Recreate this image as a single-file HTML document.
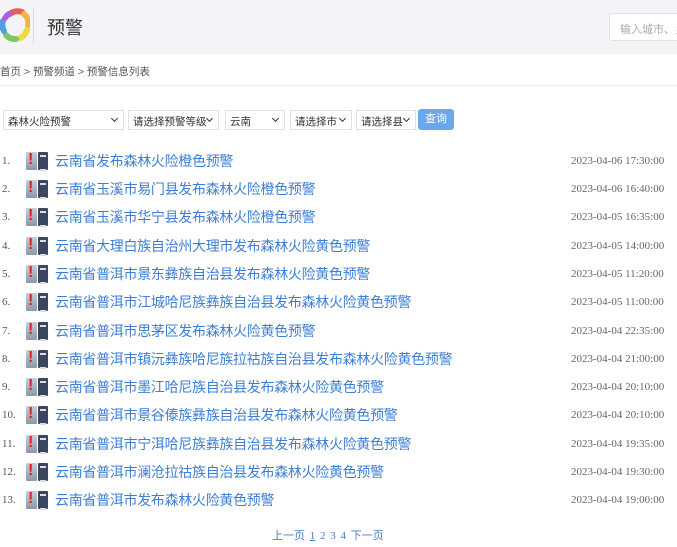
<!DOCTYPE html>
<html><head><meta charset="utf-8"><style>
*{margin:0;padding:0;box-sizing:border-box}
body{width:677px;height:547px;background:#fff;font-family:"Liberation Sans","Noto Sans CJK SC",sans-serif;position:relative;overflow:hidden;color:#333}
.hdr{position:absolute;left:0;top:0;width:677px;height:54px;background:#f3f3f8}
.sep{position:absolute;left:33px;top:8px;width:1px;height:36px;background:#ddd}
.ttl{position:absolute;left:47px;top:14px;font-size:18px;color:#333}
.srch{position:absolute;left:609px;top:13px;width:80px;height:28px;background:#fff;border:1px solid #e2e2e2;border-radius:3px;font-size:11px;color:#aaa;padding:7px 0 0 10px;white-space:nowrap}
.bc{position:absolute;left:0;top:64px;font-size:10.5px;color:#555}
.line{position:absolute;left:0;top:85px;width:677px;height:1px;background:#eee}
.sel{position:absolute;top:110px;height:20px;border:1px solid #e2e2e2;font-size:10.5px;color:#333;padding:3px 0 0 4px;background:#fff;white-space:nowrap;overflow:hidden}
.sel:after{content:"";position:absolute;right:6px;top:5px;width:4px;height:4px;border-right:1.6px solid #333;border-bottom:1.6px solid #333;transform:rotate(45deg)}
.btn{position:absolute;left:418px;top:109px;width:36px;height:21px;background:#69a7ee;color:#fff;border-radius:3px;font-size:11px;text-align:center;line-height:21px}
.row{position:absolute;left:0;height:20px;width:677px}
.n{position:absolute;left:2px;top:4px;font-family:"Liberation Serif",serif;font-size:11px;color:#555}
.ic{position:absolute;left:26px;top:1px;width:22px;height:18px}
.ic i{position:absolute;left:0;top:0;width:11px;height:18px;background:linear-gradient(#ccd,#8899aa);border-radius:1px}
.ic i:after{content:"!";position:absolute;left:2px;top:-1px;color:#e02020;font-weight:bold;font-size:16px;font-style:normal}
.ic b{position:absolute;left:12px;top:0;width:10px;height:18px;background:#3b4660;border-radius:1px}
.ic b:after{content:"";position:absolute;left:2px;top:3px;width:6px;height:12px;border-top:2px solid #ddd;border-bottom:2px solid #ddd}
.t{position:absolute;left:55px;top:0;font-size:14px;letter-spacing:-0.3px;color:#3d7fd6;white-space:nowrap}
.d{position:absolute;left:571px;top:4px;font-family:"Liberation Serif",serif;font-size:11px;color:#666}
.pg{position:absolute;left:272px;top:527px;font-size:11px;color:#4a7dc6;font-family:"Liberation Serif","Noto Sans CJK SC",serif;word-spacing:2px}
</style></head><body>
<div class="hdr">
<svg style="position:absolute;left:0;top:6px" width="30" height="38" viewBox="0 0 30 38">
<g fill="none" stroke-width="6" stroke-linecap="round" opacity="0.85">
<path d="M10 8 A12 12 0 0 1 22 6" stroke="#e8423d"/>
<path d="M24 8 A12 12 0 0 1 28 20" stroke="#f6a623"/>
<path d="M27 24 A12 12 0 0 1 20 32" stroke="#f5d320"/>
<path d="M16 33 A12 12 0 0 1 6 29" stroke="#6cc04a"/>
<path d="M4 25 A12 12 0 0 1 3 15" stroke="#3a8fe0"/>
<path d="M5 12 A12 12 0 0 1 9 8" stroke="#9b4bd6"/>
</g></svg>
<div class="sep"></div>
<div class="ttl">预警</div>
<div class="srch">输入城市、乡</div>
</div>
<div class="bc">首页 &gt; 预警频道 &gt; 预警信息列表</div>
<div class="line"></div>
<div class="sel" style="left:3px;width:121px">森林火险预警</div>
<div class="sel" style="left:128px;width:91px">请选择预警等级</div>
<div class="sel" style="left:225px;width:60px">云南</div>
<div class="sel" style="left:290px;width:62px">请选择市</div>
<div class="sel" style="left:356px;width:60px">请选择县</div>
<div class="btn">查询</div>

<div class="row" style="top:151px"><span class="n">1.</span><span class="ic"><i></i><b></b></span><span class="t">云南省发布森林火险橙色预警</span><span class="d">2023-04-06 17:30:00</span></div>
<div class="row" style="top:179px"><span class="n">2.</span><span class="ic"><i></i><b></b></span><span class="t">云南省玉溪市易门县发布森林火险橙色预警</span><span class="d">2023-04-06 16:40:00</span></div>
<div class="row" style="top:207px"><span class="n">3.</span><span class="ic"><i></i><b></b></span><span class="t">云南省玉溪市华宁县发布森林火险橙色预警</span><span class="d">2023-04-05 16:35:00</span></div>
<div class="row" style="top:236px"><span class="n">4.</span><span class="ic"><i></i><b></b></span><span class="t">云南省大理白族自治州大理市发布森林火险黄色预警</span><span class="d">2023-04-05 14:00:00</span></div>
<div class="row" style="top:264px"><span class="n">5.</span><span class="ic"><i></i><b></b></span><span class="t">云南省普洱市景东彝族自治县发布森林火险黄色预警</span><span class="d">2023-04-05 11:20:00</span></div>
<div class="row" style="top:292px"><span class="n">6.</span><span class="ic"><i></i><b></b></span><span class="t">云南省普洱市江城哈尼族彝族自治县发布森林火险黄色预警</span><span class="d">2023-04-05 11:00:00</span></div>
<div class="row" style="top:321px"><span class="n">7.</span><span class="ic"><i></i><b></b></span><span class="t">云南省普洱市思茅区发布森林火险黄色预警</span><span class="d">2023-04-04 22:35:00</span></div>
<div class="row" style="top:349px"><span class="n">8.</span><span class="ic"><i></i><b></b></span><span class="t">云南省普洱市镇沅彝族哈尼族拉祜族自治县发布森林火险黄色预警</span><span class="d">2023-04-04 21:00:00</span></div>
<div class="row" style="top:377px"><span class="n">9.</span><span class="ic"><i></i><b></b></span><span class="t">云南省普洱市墨江哈尼族自治县发布森林火险黄色预警</span><span class="d">2023-04-04 20:10:00</span></div>
<div class="row" style="top:405px"><span class="n">10.</span><span class="ic"><i></i><b></b></span><span class="t">云南省普洱市景谷傣族彝族自治县发布森林火险黄色预警</span><span class="d">2023-04-04 20:10:00</span></div>
<div class="row" style="top:434px"><span class="n">11.</span><span class="ic"><i></i><b></b></span><span class="t">云南省普洱市宁洱哈尼族彝族自治县发布森林火险黄色预警</span><span class="d">2023-04-04 19:35:00</span></div>
<div class="row" style="top:462px"><span class="n">12.</span><span class="ic"><i></i><b></b></span><span class="t">云南省普洱市澜沧拉祜族自治县发布森林火险黄色预警</span><span class="d">2023-04-04 19:30:00</span></div>
<div class="row" style="top:490px"><span class="n">13.</span><span class="ic"><i></i><b></b></span><span class="t">云南省普洱市发布森林火险黄色预警</span><span class="d">2023-04-04 19:00:00</span></div>

<div class="pg">上一页 <u>1</u> 2 3 4 下一页</div>
</body></html>
